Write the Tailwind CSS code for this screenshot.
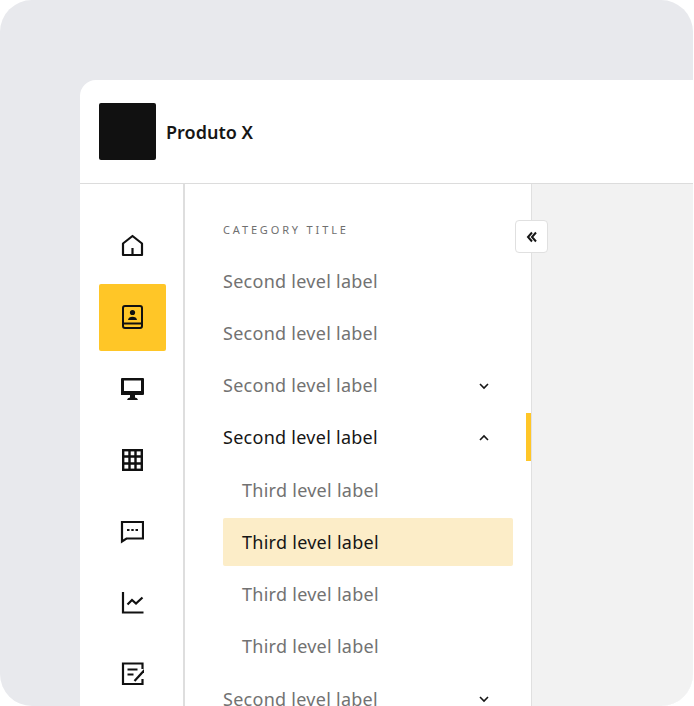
<!DOCTYPE html>
<html lang="en">
<head>
  <meta charset="UTF-8" />
  <title>Produto X</title>
  <script src="https://cdn.jsdelivr.net/npm/@tailwindcss/browser@4"></script>
</head>
<body class="bg-white h-[706px] overflow-hidden font-['Noto_Sans',sans-serif]">
  <div class="bg-[#e8e9ed] h-[706px] w-[693px] rounded-[32px] overflow-hidden pt-20 pl-20">
    <div class="bg-white h-[626px] rounded-tl-2xl overflow-hidden flex flex-col">

      <!-- Header -->
      <header class="h-[104px] shrink-0 flex items-center gap-[10px] pl-[19px] border-b border-[#dcdcdc]">
        <div class="w-[57px] h-[57px] bg-[#111111] rounded-[2px]"></div>
        <span class="pt-[2px] text-[18px] font-semibold text-[#161616]">Produto X</span>
      </header>

      <div class="flex flex-1 min-h-0">
        <!-- Icon rail -->
        <nav class="w-[105px] shrink-0 border-r-2 border-[#dedede] pl-[19px] pt-[28.6px] flex flex-col gap-[4.4px]">
          <div class="w-[67px] h-[67px] shrink-0 flex items-center pl-[21px]">
            <svg width="24" height="24" viewBox="-0.5 0 24 24" fill="none" stroke="#111111" stroke-width="2.2" stroke-linejoin="round"><path d="M12 2 L21.5 9.5 V21 H2.5 V9.5 Z" /><path d="M12 14 V21" /></svg>
          </div>
          <div class="w-[67px] h-[67px] shrink-0 flex items-center pl-[21px] bg-[#ffc627] rounded-[2px]">
            <svg width="24" height="24" viewBox="-0.5 0 24 24" fill="none" stroke="#111111" stroke-width="2"><rect x="2.5" y="1" width="19" height="22" rx="2" /><path d="M3 18.5 H21" /><circle cx="12" cy="7.5" r="2.6" fill="#111111" stroke="none" /><path d="M7.5 15 C7.5 10.5 16.5 10.5 16.5 15 Z" fill="#111111" stroke="none" /></svg>
          </div>
          <div class="w-[67px] h-[67px] shrink-0 flex items-center pl-[21px]">
            <svg width="24" height="24" viewBox="-0.5 0 24 24" fill="#111111"><path fill-rule="evenodd" d="M1.5 1 H22.5 Q23.5 1 23.5 2 V17 Q23.5 18 22.5 18 H0.5 V2 Q0.5 1 1.5 1 Z M3.5 3.5 V14 H20.5 V3.5 Z" /><path d="M9.5 18 H14.5 V20.5 Q17 20.5 17.5 23 H6.5 Q7 20.5 9.5 20.5 Z" /></svg>
          </div>
          <div class="w-[67px] h-[67px] shrink-0 flex items-center pl-[21px]">
            <svg width="24" height="24" viewBox="-0.5 0 24 24" fill="none" stroke="#111111" stroke-width="2.4"><rect x="2.7" y="2.2" width="18.6" height="19.6" /><path d="M9 2 V22 M15 2 V22 M2.5 8.5 H21.5 M2.5 15.5 H21.5" /></svg>
          </div>
          <div class="w-[67px] h-[67px] shrink-0 flex items-center pl-[21px]">
            <svg width="24" height="24" viewBox="-0.5 0 24 24" fill="none" stroke="#111111" stroke-width="2.2"><path d="M1.5 2 H22.5 V18.5 H6 L1.5 21.5 Z" /><path d="M6.5 10 H9 M10.8 10 H13.2 M15 10 H17.5" /></svg>
          </div>
          <div class="w-[67px] h-[67px] shrink-0 flex items-center pl-[21px]">
            <svg width="24" height="24" viewBox="-0.5 0 24 24" fill="none" stroke="#111111" stroke-width="2.2"><path d="M2.5 1 V21.5 H23" /><path d="M7 13.5 L11.5 9 L15.5 12.5 L22 6.5" /></svg>
          </div>
          <div class="w-[67px] h-[67px] shrink-0 flex items-center pl-[21px]">
            <svg width="24" height="24" viewBox="-0.5 0 24 24" fill="none" stroke="#111111" stroke-width="2.2"><path d="M22 7 V1.5 H2.5 V22 H22 V17" /><path d="M7 7.5 H17 M7 12.5 H13" /><path d="M14 19 L24 8" /></svg>
          </div>
        </nav>

        <!-- Menu -->
        <aside class="relative w-[347px] shrink-0 border-r border-[#e0e0e0] pl-[38px] pr-[18px] pt-[38px]">
          <p class="h-[16px] leading-[16px] text-[11px] tracking-[2.85px] text-[#6f6f6f]">CATEGORY TITLE</p>
          <ul class="mt-[17px] text-[18px] tracking-[0.27px] text-[#727272]">
            <li class="h-[52.25px] flex items-center">Second level label</li>
            <li class="h-[52.25px] flex items-center">Second level label</li>
            <li class="h-[52.25px] flex items-center justify-between pr-[23px]">
              Second level label
              <svg width="12" height="12" viewBox="0 0 12 12" fill="none" stroke="#161616" stroke-width="1.6"><path d="M2 4 L6 8 L10 4" /></svg>
            </li>
            <li class="h-[52.25px] flex items-center justify-between pr-[23px] text-[#161616]">
              Second level label
              <svg width="12" height="12" viewBox="0 0 12 12" fill="none" stroke="#161616" stroke-width="1.6"><path d="M2 8 L6 4 L10 8" /></svg>
            </li>
            <li class="h-[52.25px] flex items-center pl-[19px]">Third level label</li>
            <li class="h-[47.5px] mt-[2px] mb-[2.75px] flex items-center pl-[19px] bg-[#fcedc8] rounded-[2px] text-[#161616]">Third level label</li>
            <li class="h-[52.25px] flex items-center pl-[19px]">Third level label</li>
            <li class="h-[52.25px] flex items-center pl-[19px]">Third level label</li>
            <li class="h-[52.25px] flex items-center justify-between pr-[23px]">
              Second level label
              <svg width="12" height="12" viewBox="0 0 12 12" fill="none" stroke="#161616" stroke-width="1.6"><path d="M2 4 L6 8 L10 4" /></svg>
            </li>
          </ul>
          <!-- active marker on the sidebar edge -->
          <div class="absolute right-0 top-[229px] w-[5px] h-[48px] bg-[#ffc627]"></div>
          <!-- collapse button -->
          <button class="absolute -right-[17px] top-[36px] w-[33px] h-[33px] bg-white border border-[#e0e0e0] rounded-[4px] flex items-center justify-center">
            <svg width="14" height="14" viewBox="0 0 14 14" fill="none" stroke="#161616" stroke-width="2"><path d="M7 2.5 L3 7 L7 11.5 M11 2.5 L7 7 L11 11.5" /></svg>
          </button>
        </aside>

        <div class="flex-1 bg-[#f2f2f2]"></div>
      </div>
    </div>
  </div>
</body>
</html>
